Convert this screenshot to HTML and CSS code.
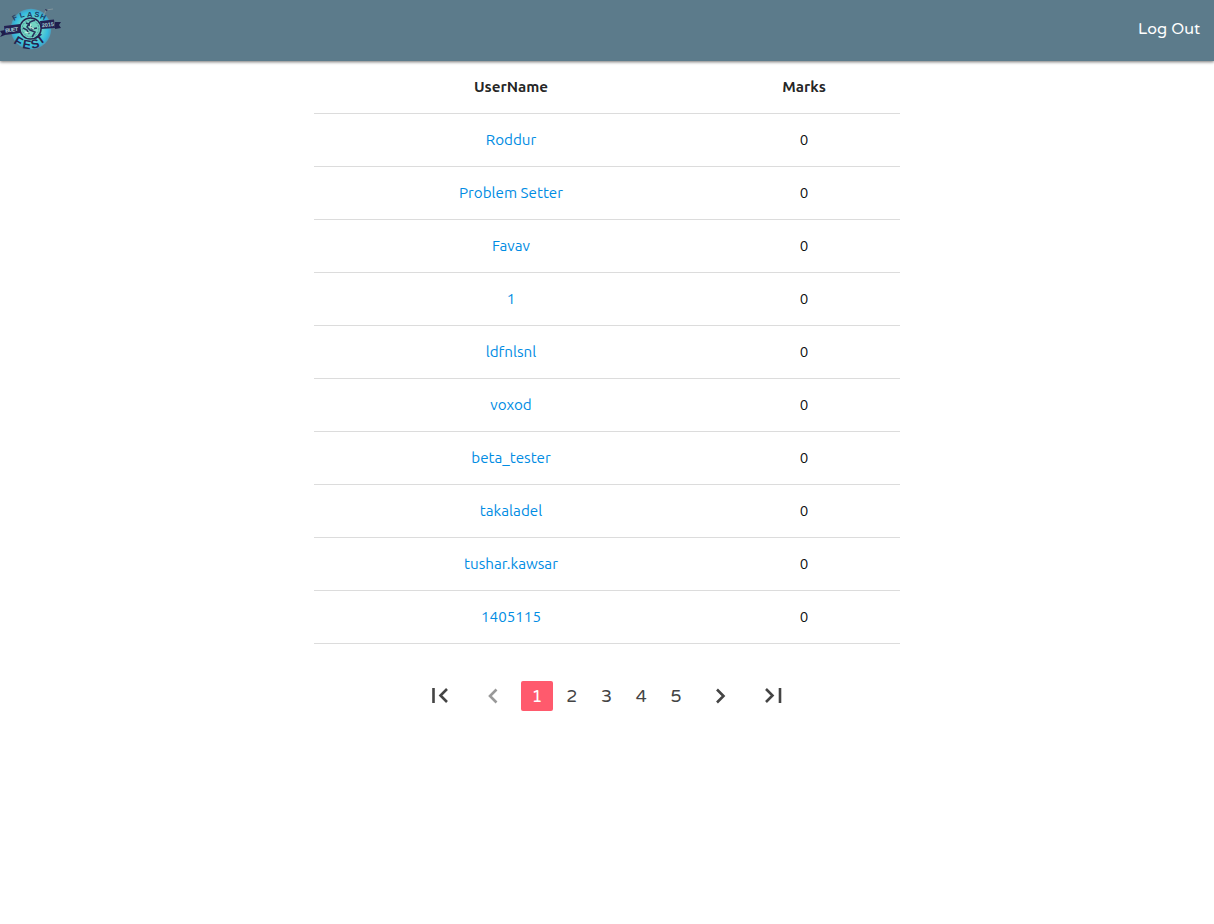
FILE: index.html
```html
<!DOCTYPE html>
<html lang="en">
<head>
<meta charset="utf-8">
<title>Ranking</title>
<link rel="stylesheet" href="styles.css">
</head>
<body>
<nav class="navbar">
  <a class="brand" aria-label="BUET FEST 2015">
    <svg class="logo" viewBox="0 0 64 60" width="64" height="60">
      <defs>
        <radialGradient id="disc"><stop offset="0" stop-color="#80dcc5"/><stop offset=".58" stop-color="#60cfce"/><stop offset=".84" stop-color="#35bce0"/><stop offset="1" stop-color="#4a9dbd"/></radialGradient>
      </defs>
      <circle cx="31" cy="29" r="20.2" fill="url(#disc)"/>
      <g class="logo-top">
        <text x="14" y="21" transform="rotate(-30 14 21)">F</text>
        <text x="20.5" y="18" transform="rotate(-18 20.5 18)">L</text>
        <text x="27" y="16.5">A</text>
        <text x="34" y="16.5" transform="rotate(12 34 16)">S</text>
        <text x="39.5" y="18" transform="rotate(25 39.5 18)">H</text>
      </g>
      <path d="M44 15l2-5 7-1" fill="none" stroke="#87979d" stroke-width=".9"/>
      <path d="M45 9l3 1-2 1z" fill="#25224f"/>
      <path d="M0 31l5-1v5l-5 2 2-3zM55 22l6 0-2 3 2 3-6 1z" fill="#1e1d4b"/>
      <path d="M4 26L20 24V33L5 35zM40 21L54 19.5 55 28 41 29z" fill="#242153"/>
      <circle cx="30.5" cy="28.5" r="10.6" fill="#73d4c2" stroke="#25224f" stroke-width="1.5"/>
      <circle cx="30.5" cy="28.5" r="8.3" fill="none" stroke="#337888" stroke-width=".7" stroke-dasharray="2 1"/>
      <path d="M35 20l-5 2-3 5 3 3 5 2-3 5M23 28l4 2 2 4M26 23l3 1 3 5 5-1" fill="none" stroke="#26315b" stroke-width="1.5"/>
      <path d="M31 24l-1 3 4 2M25 32l4 1" fill="none" stroke="#c8f3df" stroke-width="1.1"/>
      <text class="logo-ribbon" x="5.5" y="32.5" transform="rotate(-7 5.5 32.5)" textLength="13">BUET</text>
      <text class="logo-ribbon" x="42" y="27.2" transform="rotate(-6 42 27.2)" textLength="12">2015</text>
      <g class="logo-fest">
        <text x="13" y="43" transform="rotate(31 13 43)">F</text>
        <text x="22" y="48" transform="rotate(10 22 48)">E</text>
        <text x="32" y="49" transform="rotate(-14 32 49)">S</text>
        <text x="40" y="45" transform="rotate(-36 40 45)">T</text>
      </g>
    </svg>
  </a>
  <a class="logout">Log Out</a>
</nav>
<main class="content">
  <table class="ranking">
    <thead><tr><th class="name">UserName</th><th>Marks</th></tr></thead>
    <tbody>
      <tr><td><a>Roddur</a></td><td>0</td></tr>
      <tr><td><a>Problem Setter</a></td><td>0</td></tr>
      <tr><td><a>Favav</a></td><td>0</td></tr>
      <tr><td><a>1</a></td><td>0</td></tr>
      <tr><td><a>ldfnlsnl</a></td><td>0</td></tr>
      <tr><td><a>voxod</a></td><td>0</td></tr>
      <tr><td><a>beta_tester</a></td><td>0</td></tr>
      <tr><td><a>takaladel</a></td><td>0</td></tr>
      <tr><td><a>tushar.kawsar</a></td><td>0</td></tr>
      <tr><td><a>1405115</a></td><td>0</td></tr>
    </tbody>
  </table>
  <ul class="pagination">
    <li class="arrow"><svg viewBox="0 0 30 30"><path d="M7.5 7v15M21 8L14.5 14.5 21 21"/></svg></li>
    <li class="arrow disabled"><svg viewBox="0 0 30 30"><path d="M17.5 8.5L11 15l6.5 6.5"/></svg></li>
    <li class="page active">1</li>
    <li class="page">2</li>
    <li class="page">3</li>
    <li class="page">4</li>
    <li class="page">5</li>
    <li class="arrow"><svg viewBox="0 0 30 30"><path d="M12 8.5L18.5 15l-6.5 6.5"/></svg></li>
    <li class="arrow"><svg viewBox="0 0 30 30"><path d="M8 8L14.5 14.5 8 21M22 7v15"/></svg></li>
  </ul>
</main>
</body>
</html>
```
FILE: styles.css
```css
* { box-sizing: border-box; }
body { margin: 0; background: #fff; color: rgba(0,0,0,.87); font: 15.2px "Ubuntu", "Noto Sans", sans-serif; }
.navbar { position: relative; display: flex; justify-content: space-between; height: 61px; background: #5c7b8b; box-shadow: 0 1px 3px rgba(0,0,0,.55); }
.brand { display: block; height: 60px; }
.logo { display: block; }
.logo text { font-family: "Liberation Sans", sans-serif; font-weight: bold; }
.logo .logo-top text { font-size: 7.5px; fill: #203c62; }
.logo .logo-ribbon { font-size: 5.5px; fill: #a5cfd3; }
.logo .logo-fest text { font-size: 12.5px; fill: #25224f; }
.logout { padding-right: 14px; color: #fff; font: 16px/59px "Varela Round", "Lato", sans-serif; }
.content { width: 586px; margin: 0 auto; }
.ranking { width: 100%; table-layout: fixed; border-collapse: separate; border-spacing: 0; text-align: center; }
.ranking tr { height: 53px; }
.ranking th, .ranking td { height: 53px; padding: 0; border-bottom: 1px solid #dcdcdc; font-size: 15.2px; line-height: 20px; }
.ranking td { color: rgba(0,0,0,.95); }
.name { width: 394px; }
.ranking a { color: #008ce3; }
.pagination { display: flex; justify-content: center; align-items: center; gap: 2.8px; list-style: none; margin: 37px 0 0; padding: 0; height: 30px; color: #444; }
.page { width: 32px; height: 30px; padding-right: 1px; border-radius: 2px; text-align: center; font: 17.6px/31px "Varela Round", "Lato", sans-serif; }
.active { background: #ff5a6d; color: #fff; }
.arrow { display: flex; justify-content: center; width: 50px; height: 30px; }
.arrow svg { width: 30px; height: 30px; fill: none; stroke: #444; stroke-width: 2.6; }
.disabled svg { stroke: #999; }
```
